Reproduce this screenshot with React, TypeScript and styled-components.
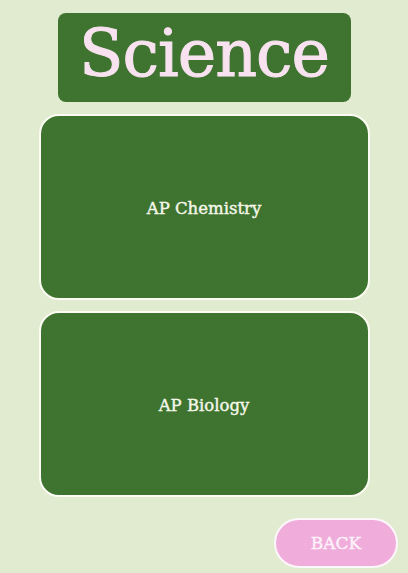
import React from "react";
import styled, { createGlobalStyle } from "styled-components";

const GlobalStyle = createGlobalStyle`
  html, body {
    margin: 0;
    padding: 0;
    background: #e1ebd0;
  }
  body {
    font-family: "DejaVu Serif", Georgia, serif;
  }
`;

const Page = styled.div`
  width: 408px;
  min-height: 573px;
  box-sizing: border-box;
  padding: 13px 10px 0;
  display: flex;
  flex-direction: column;
  align-items: center;
`;

const TitleBox = styled.h1`
  margin: 0;
  width: 293px;
  height: 89px;
  box-sizing: border-box;
  padding-bottom: 9px;
  border-radius: 8px;
  background: #3e742f;
  color: #f8e2f0;
  font-family: "DejaVu Serif", Georgia, serif;
  font-weight: normal;
  font-size: 65px;
  -webkit-text-stroke: 1px #f8e2f0;
  display: flex;
  align-items: center;
  justify-content: center;
  letter-spacing: -1px;
`;

const CourseList = styled.div`
  margin-top: 12px;
  display: flex;
  flex-direction: column;
  gap: 11px;
`;

const CourseCard = styled.button`
  width: 331px;
  height: 186px;
  box-sizing: border-box;
  border: 2px solid #fbfbf3;
  border-radius: 20px;
  background: #3e742f;
  color: #f5f7ea;
  font-family: "DejaVu Serif", Georgia, serif;
  font-size: 16.5px;
  -webkit-text-stroke: 0.4px #f5f7ea;
  cursor: pointer;
  display: flex;
  align-items: center;
  justify-content: center;
  padding: 2px 0 0;
`;

const Footer = styled.div`
  align-self: stretch;
  display: flex;
  justify-content: flex-end;
  margin-top: 21px;
`;

const BackButton = styled.button`
  width: 124px;
  height: 50px;
  box-sizing: border-box;
  border: 2px solid #fdf7fb;
  border-radius: 25px;
  background: #f0addc;
  color: #fdf2f9;
  font-family: "DejaVu Serif", Georgia, serif;
  font-size: 17px;
  -webkit-text-stroke: 0.4px #fdf2f9;
  cursor: pointer;
`;

const courses = ["AP Chemistry", "AP Biology"];

export default function App() {
  return (
    <>
      <GlobalStyle />
      <Page>
        <TitleBox>Science</TitleBox>
        <CourseList>
          {courses.map(name => (
            <CourseCard key={name}>{name}</CourseCard>
          ))}
        </CourseList>
        <Footer>
          <BackButton>BACK</BackButton>
        </Footer>
      </Page>
    </>
  );
}
